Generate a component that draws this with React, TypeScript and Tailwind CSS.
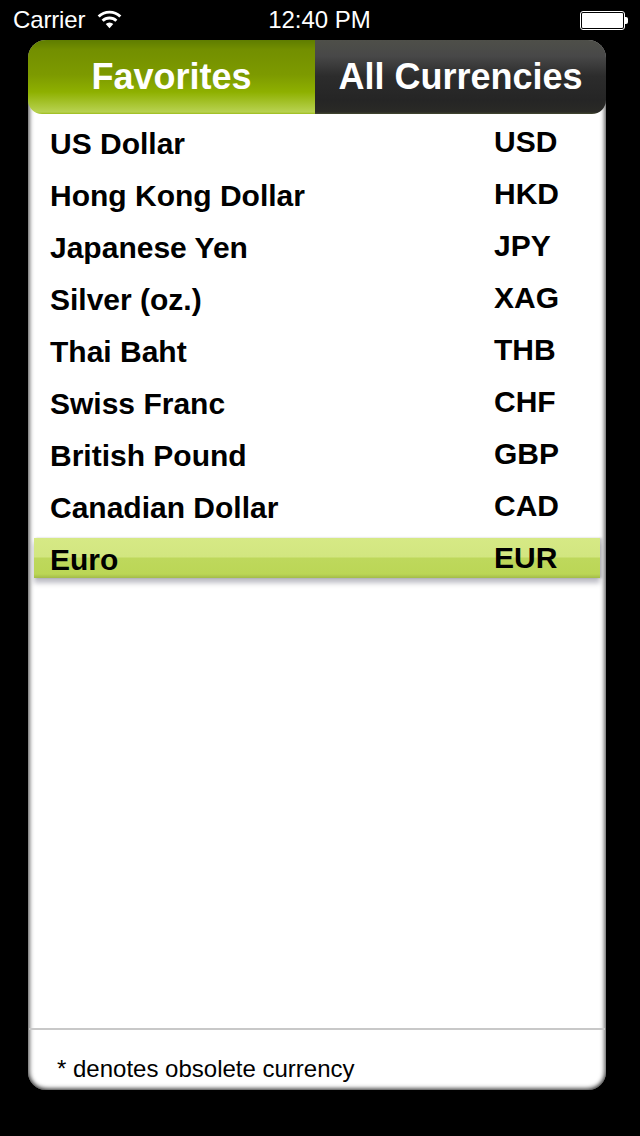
const FAVORITOS = [
  ['US Dollar', 'USD'],
  ['Hong Kong Dollar', 'HKD'],
  ['Japanese Yen', 'JPY'],
  ['Silver (oz.)', 'XAG'],
  ['Thai Baht', 'THB'],
  ['Swiss Franc', 'CHF'],
  ['British Pound', 'GBP'],
  ['Canadian Dollar', 'CAD'],
]

function Wifi() {
  return (
    <svg width="25" height="19" viewBox="0 0 24 18" className="ml-[12px] mt-[-1px]">
      <path d="M12 17.5 L8.4 13.4 A5 5 0 0 1 15.6 13.4 Z" fill="#fff" />
      <path d="M5.4 10.2 A9.4 9.4 0 0 1 18.6 10.2" fill="none" stroke="#fff" strokeWidth="2.8" />
      <path d="M1.6 6.2 A14.8 14.8 0 0 1 22.4 6.2" fill="none" stroke="#fff" strokeWidth="2.8" />
    </svg>
  )
}

function Battery() {
  return (
    <div className="flex items-center">
      <div className="h-[19px] w-[45px] rounded-[3px] border border-white bg-black p-[1px]">
        <div className="h-full w-full rounded-[1px] bg-white" />
      </div>
      <div className="h-[7px] w-[3px] rounded-r-[2px] bg-white" />
    </div>
  )
}

function Fila({ nombre, codigo }: { nombre: string; codigo: string }) {
  return (
    <div className="flex h-[52px] items-center pl-[22px] text-[30px] font-bold text-black">
      <span className="w-[444px] leading-none">{nombre}</span>
      <span className="mb-[5px] leading-none">{codigo}</span>
    </div>
  )
}

export default function App() {
  return (
    <div className="flex h-[1136px] w-[640px] flex-col bg-black font-['Liberation_Sans',Arial,sans-serif]">
      <div className="relative flex h-[40px] items-center px-[13px] text-[24px] leading-none text-white">
        <span className="tracking-[-0.15px]">Carrier</span>
        <Wifi />
        <span className="absolute left-[-1px] right-0 text-center">12:40 PM</span>
        <div className="ml-auto mr-[-1px]">
          <Battery />
        </div>
      </div>

      <div className="ml-[28px] flex h-[1050px] w-[578px] flex-col overflow-hidden rounded-[18px] bg-white shadow-[inset_3px_0_4px_-1px_rgba(0,0,0,0.5),inset_-3px_0_4px_-1px_rgba(0,0,0,0.5),inset_0_-3px_4px_-1px_rgba(0,0,0,0.5)]">
        <div className="flex h-[74px] shrink-0 text-[36px] font-bold leading-none text-white">
          <div className="flex w-[287px] items-center justify-center rounded-bl-[14px] bg-[linear-gradient(#5f7d00_0px,#738f00_10px,#7d9a00_35px,#8eb000_52px,#b8d251_72px,#9cbc1c_74px)]">
            Favorites
          </div>
          <div className="flex flex-1 items-center justify-center rounded-br-[14px] bg-[linear-gradient(#4e4f49_0px,#484848_16px,#2c2c2c_36px,#252525_60px,#2a2a26_72px,#454a30_74px)]">
            All Currencies
          </div>
        </div>

        <div className="flex flex-1 flex-col pt-[4px]">
          {FAVORITOS.map(([nombre, codigo]) => (
            <Fila key={codigo} nombre={nombre} codigo={codigo} />
          ))}
          <div className="mx-[6px] mt-[4px] flex h-[40px] items-center bg-[linear-gradient(#d6e985_0px,#d2e680_19px,#bed85c_20px,#bbd656_36px,#a3bc48_40px)] pl-[16px] text-[30px] font-bold text-black shadow-[0_5px_5px_rgba(90,90,110,0.4),2px_0_2px_rgba(90,90,90,0.3)]">
            <span className="mt-[4px] w-[444px] leading-none">Euro</span>
            <span className="mt-[-1px] leading-none">EUR</span>
          </div>
        </div>

        <div className="mx-[1px] flex h-[62px] shrink-0 items-center border-t-2 border-[#c8c8c8] pt-[17px] pl-[28px] text-[24px] leading-none text-black">
          * denotes obsolete currency
        </div>
      </div>
    </div>
  )
}
